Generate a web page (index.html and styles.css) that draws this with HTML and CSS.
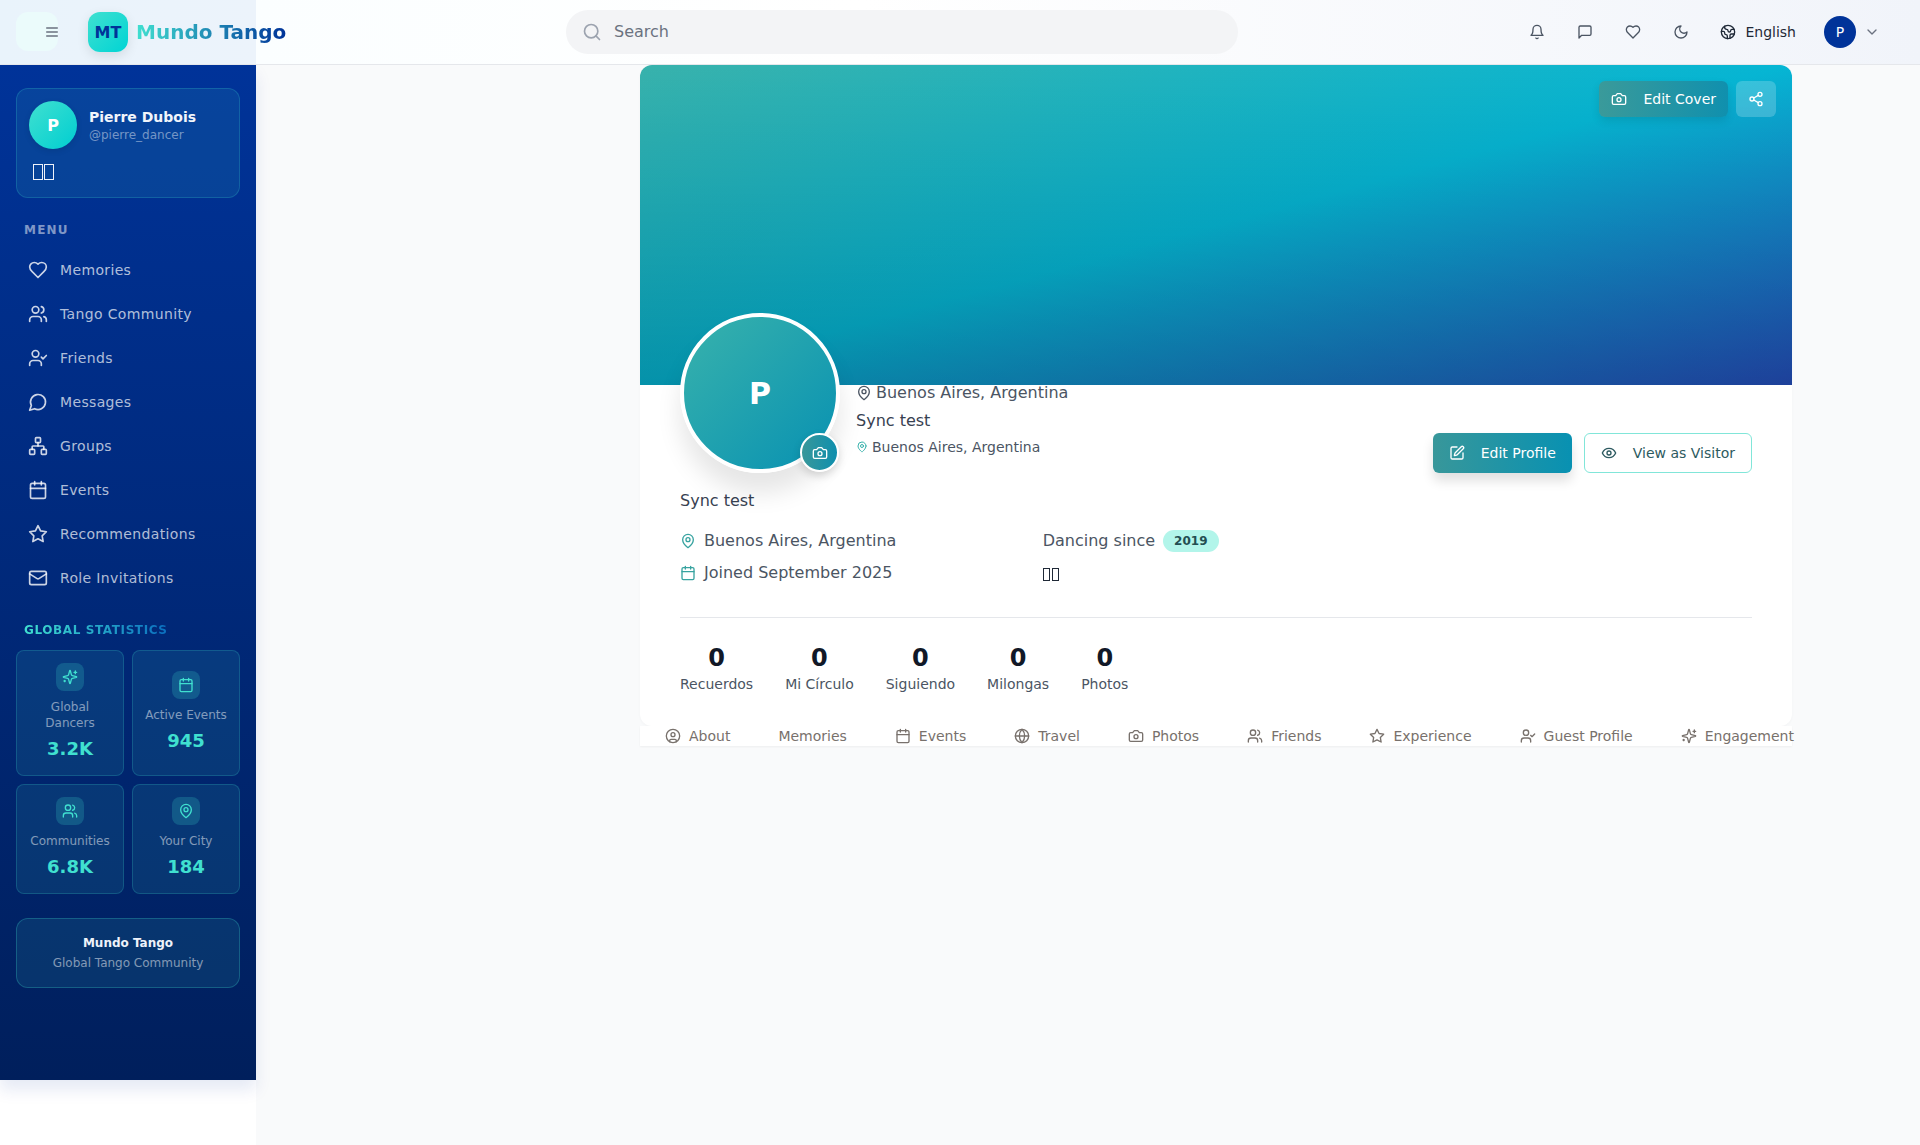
FILE: index.html
```html
<!DOCTYPE html>
<html lang="en">
<head>
  <meta charset="utf-8">
  <title>Mundo Tango</title>
  <meta name="viewport" content="width=device-width, initial-scale=1.0">
  <link rel="stylesheet" href="styles.css">
</head>
<body>
<svg class="sprite" xmlns="http://www.w3.org/2000/svg">
  <symbol id="i-menu" viewBox="0 0 24 24"><path d="M4 6h16M4 12h16M4 18h16"/></symbol>
  <symbol id="i-search" viewBox="0 0 24 24"><circle cx="11" cy="11" r="8"/><path d="m21 21-4.3-4.3"/></symbol>
  <symbol id="i-bell" viewBox="0 0 24 24"><path d="M6 8a6 6 0 0 1 12 0c0 7 3 9 3 9H3s3-2 3-9"/><path d="M10.3 21a1.94 1.94 0 0 0 3.4 0"/></symbol>
  <symbol id="i-square" viewBox="0 0 24 24"><path d="M21 15a2 2 0 0 1-2 2H7l-4 4V5a2 2 0 0 1 2-2h14a2 2 0 0 1 2 2z"/></symbol>
  <symbol id="i-heart" viewBox="0 0 24 24"><path d="M19 14c1.49-1.46 3-3.21 3-5.5A5.5 5.5 0 0 0 16.5 3c-1.76 0-3 .5-4.5 2-1.5-1.5-2.74-2-4.5-2A5.5 5.5 0 0 0 2 8.5c0 2.3 1.5 4.05 3 5.5l7 7Z"/></symbol>
  <symbol id="i-moon" viewBox="0 0 24 24"><path d="M12 3a6 6 0 0 0 9 9 9 9 0 1 1-9-9Z"/></symbol>
  <symbol id="i-earth" viewBox="0 0 24 24"><path d="M21.54 15H17a2 2 0 0 0-2 2v4.54"/><path d="M7 3.34V5a3 3 0 0 0 3 3a2 2 0 0 1 2 2c0 1.1.9 2 2 2a2 2 0 0 0 2-2c0-1.1.9-2 2-2h3.17"/><path d="M11 21.95V18a2 2 0 0 0-2-2a2 2 0 0 1-2-2v-1a2 2 0 0 0-2-2H2.05"/><circle cx="12" cy="12" r="10"/></symbol>
  <symbol id="i-chevron" viewBox="0 0 24 24"><path d="m6 9 6 6 6-6"/></symbol>
  <symbol id="i-users" viewBox="0 0 24 24"><path d="M16 21v-2a4 4 0 0 0-4-4H6a4 4 0 0 0-4 4v2"/><circle cx="9" cy="7" r="4"/><path d="M22 21v-2a4 4 0 0 0-3-3.87"/><path d="M16 3.13a4 4 0 0 1 0 7.75"/></symbol>
  <symbol id="i-usercheck" viewBox="0 0 24 24"><path d="M16 21v-2a4 4 0 0 0-4-4H6a4 4 0 0 0-4 4v2"/><circle cx="9" cy="7" r="4"/><path d="m16 11 2 2 4-4"/></symbol>
  <symbol id="i-message" viewBox="0 0 24 24"><path d="M7.9 20A9 9 0 1 0 4 16.1L2 22Z"/></symbol>
  <symbol id="i-network" viewBox="0 0 24 24"><rect x="16" y="16" width="6" height="6" rx="1"/><rect x="2" y="16" width="6" height="6" rx="1"/><rect x="9" y="2" width="6" height="6" rx="1"/><path d="M5 16v-3a1 1 0 0 1 1-1h12a1 1 0 0 1 1 1v3"/><path d="M12 12V8"/></symbol>
  <symbol id="i-calendar" viewBox="0 0 24 24"><path d="M8 2v4M16 2v4"/><rect x="3" y="4" width="18" height="18" rx="2"/><path d="M3 10h18"/></symbol>
  <symbol id="i-star" viewBox="0 0 24 24"><path d="M12 2l3.09 6.26L22 9.27l-5 4.87 1.18 6.88L12 17.77l-6.18 3.25L7 14.14 2 9.27l6.91-1.01z"/></symbol>
  <symbol id="i-mail" viewBox="0 0 24 24"><rect x="2" y="4" width="20" height="16" rx="2"/><path d="m22 7-8.97 5.7a1.94 1.94 0 0 1-2.06 0L2 7"/></symbol>
  <symbol id="i-sparkles" viewBox="0 0 24 24"><path d="M9.937 15.5A2 2 0 0 0 8.5 14.063l-6.135-1.582a.5.5 0 0 1 0-.962L8.5 9.936A2 2 0 0 0 9.937 8.5l1.582-6.135a.5.5 0 0 1 .963 0L14.063 8.5A2 2 0 0 0 15.5 9.937l6.135 1.581a.5.5 0 0 1 0 .964L15.5 14.063a2 2 0 0 0-1.437 1.437l-1.582 6.135a.5.5 0 0 1-.963 0z"/><path d="M20 3v4M22 5h-4M4 17v2M5 18H3"/></symbol>
  <symbol id="i-pin" viewBox="0 0 24 24"><path d="M20 10c0 6-8 12-8 12s-8-6-8-12a8 8 0 0 1 16 0Z"/><circle cx="12" cy="10" r="3"/></symbol>
  <symbol id="i-camera" viewBox="0 0 24 24"><path d="M14.5 4h-5L7 7H4a2 2 0 0 0-2 2v9a2 2 0 0 0 2 2h16a2 2 0 0 0 2-2V9a2 2 0 0 0-2-2h-3l-2.5-3z"/><circle cx="12" cy="13" r="3"/></symbol>
  <symbol id="i-share" viewBox="0 0 24 24"><circle cx="18" cy="5" r="3"/><circle cx="6" cy="12" r="3"/><circle cx="18" cy="19" r="3"/><path d="m8.59 13.51 6.83 3.98M15.41 6.51l-6.82 3.98"/></symbol>
  <symbol id="i-edit" viewBox="0 0 24 24"><path d="M12 3H5a2 2 0 0 0-2 2v14a2 2 0 0 0 2 2h14a2 2 0 0 0 2-2v-7"/><path d="M18.375 2.625a1 1 0 0 1 3 3l-9.013 9.014a2 2 0 0 1-.853.505l-2.873.84a.5.5 0 0 1-.62-.62l.84-2.873a2 2 0 0 1 .506-.852z"/></symbol>
  <symbol id="i-eye" viewBox="0 0 24 24"><path d="M2 12s3-7 10-7 10 7 10 7-3 7-10 7-10-7-10-7Z"/><circle cx="12" cy="12" r="3"/></symbol>
  <symbol id="i-usercircle" viewBox="0 0 24 24"><circle cx="12" cy="12" r="10"/><circle cx="12" cy="10" r="3"/><path d="M7 20.662V19a2 2 0 0 1 2-2h6a2 2 0 0 1 2 2v1.662"/></symbol>
  <symbol id="i-globe" viewBox="0 0 24 24"><circle cx="12" cy="12" r="10"/><path d="M12 2a14.5 14.5 0 0 0 0 20 14.5 14.5 0 0 0 0-20"/><path d="M2 12h20"/></symbol>
</svg>

<header class="topbar">
  <div class="ghost-logo"></div>
  <div class="topbar-left">
    <button class="menu-btn"><svg class="icon-16"><use href="#i-menu"/></svg></button>
    <div class="logo">MT</div>
    <span class="brand">Mundo Tango</span>
  </div>
  <div class="search">
    <svg class="icon-20"><use href="#i-search"/></svg>
    <span>Search</span>
  </div>
  <div class="topbar-right">
    <button class="top-btn"><svg class="icon-16"><use href="#i-bell"/></svg></button>
    <button class="top-btn"><svg class="icon-16"><use href="#i-square"/></svg></button>
    <button class="top-btn"><svg class="icon-16"><use href="#i-heart"/></svg></button>
    <button class="top-btn"><svg class="icon-16"><use href="#i-moon"/></svg></button>
    <div class="lang"><svg class="icon-16"><use href="#i-earth"/></svg><span>English</span></div>
    <div class="top-avatar">P</div>
    <svg class="icon-16 top-chevron"><use href="#i-chevron"/></svg>
  </div>
</header>

<div class="shell">
  <div class="side-col">
    <aside class="sidebar">
      <div class="me">
        <div class="me-row">
          <div class="me-avatar">P</div>
          <div>
            <div class="me-name">Pierre Dubois</div>
            <div class="me-handle">@pierre_dancer</div>
          </div>
        </div>
        <div class="tofu tofu-lg"><i></i><i></i></div>
      </div>

      <h3 class="side-title">MENU</h3>
      <nav class="side-nav">
        <a><svg class="icon-20"><use href="#i-heart"/></svg>Memories</a>
        <a><svg class="icon-20"><use href="#i-users"/></svg>Tango Community</a>
        <a><svg class="icon-20"><use href="#i-usercheck"/></svg>Friends</a>
        <a><svg class="icon-20"><use href="#i-message"/></svg>Messages</a>
        <a><svg class="icon-20"><use href="#i-network"/></svg>Groups</a>
        <a><svg class="icon-20"><use href="#i-calendar"/></svg>Events</a>
        <a><svg class="icon-20"><use href="#i-star"/></svg>Recommendations</a>
        <a><svg class="icon-20"><use href="#i-mail"/></svg>Role Invitations</a>
      </nav>

      <h3 class="side-title stats-title"><span>GLOBAL STATISTICS</span></h3>
      <div class="stat-grid">
        <div class="stat-card">
          <div class="stat-icon"><svg class="icon-16"><use href="#i-sparkles"/></svg></div>
          <div class="stat-label">Global Dancers</div>
          <div class="stat-value">3.2K</div>
        </div>
        <div class="stat-card">
          <div class="stat-icon"><svg class="icon-16"><use href="#i-calendar"/></svg></div>
          <div class="stat-label">Active Events</div>
          <div class="stat-value">945</div>
        </div>
        <div class="stat-card">
          <div class="stat-icon"><svg class="icon-16"><use href="#i-users"/></svg></div>
          <div class="stat-label">Communities</div>
          <div class="stat-value">6.8K</div>
        </div>
        <div class="stat-card">
          <div class="stat-icon"><svg class="icon-16"><use href="#i-pin"/></svg></div>
          <div class="stat-label">Your City</div>
          <div class="stat-value">184</div>
        </div>
      </div>

      <div class="side-foot">
        <strong>Mundo Tango</strong>
        <span>Global Tango Community</span>
      </div>
    </aside>
  </div>

  <main class="content">
    <section class="card">
      <div class="cover">
        <div class="cover-actions">
          <button class="edit-cover"><svg class="icon-16"><use href="#i-camera"/></svg>Edit Cover</button>
          <button class="share"><svg class="icon-16"><use href="#i-share"/></svg></button>
        </div>
      </div>

      <div class="card-body">
        <div class="head-row">
          <div class="avatar">
            P
            <span class="avatar-cam"><svg class="icon-16"><use href="#i-camera"/></svg></span>
          </div>
          <div class="head-info">
            <div class="head-loc"><svg class="icon-16"><use href="#i-pin"/></svg>Buenos Aires, Argentina</div>
            <div class="head-bio">Sync test</div>
            <div class="head-loc2"><svg class="icon-12"><use href="#i-pin"/></svg>Buenos Aires, Argentina</div>
          </div>
          <div class="head-actions">
            <button class="btn-edit"><svg class="icon-16"><use href="#i-edit"/></svg>Edit Profile</button>
            <button class="btn-visitor"><svg class="icon-16"><use href="#i-eye"/></svg>View as Visitor</button>
          </div>
        </div>

        <p class="bio">Sync test</p>

        <div class="meta">
          <div class="meta-item"><svg class="icon-16"><use href="#i-pin"/></svg>Buenos Aires, Argentina</div>
          <div class="meta-item">Dancing since <span class="badge">2019</span></div>
          <div></div>
          <div class="meta-item"><svg class="icon-16"><use href="#i-calendar"/></svg>Joined September 2025</div>
          <div class="meta-item"><div class="tofu"><i></i><i></i></div></div>
        </div>

        <div class="counts">
          <div class="count"><b>0</b><span>Recuerdos</span></div>
          <div class="count"><b>0</b><span>Mi Círculo</span></div>
          <div class="count"><b>0</b><span>Siguiendo</span></div>
          <div class="count"><b>0</b><span>Milongas</span></div>
          <div class="count"><b>0</b><span>Photos</span></div>
        </div>
      </div>
    </section>

    <nav class="tabs">
      <a><svg class="icon-16"><use href="#i-usercircle"/></svg>About</a>
      <a>Memories</a>
      <a><svg class="icon-16"><use href="#i-calendar"/></svg>Events</a>
      <a><svg class="icon-16"><use href="#i-globe"/></svg>Travel</a>
      <a><svg class="icon-16"><use href="#i-camera"/></svg>Photos</a>
      <a><svg class="icon-16"><use href="#i-users"/></svg>Friends</a>
      <a><svg class="icon-16"><use href="#i-star"/></svg>Experience</a>
      <a><svg class="icon-16"><use href="#i-usercheck"/></svg>Guest Profile</a>
      <a><svg class="icon-16"><use href="#i-sparkles"/></svg>Engagement</a>
    </nav>
  </main>
</div>
</body>
</html>
```

FILE: styles.css
```css
html {
  box-sizing: border-box;
}

*, *:before, *:after {
  box-sizing: inherit;
}

body {
  margin: 0;
  height: 1145px;
  overflow: hidden;
  background: #f9fafb;
  color: #374151;
  font-family: "DejaVu Sans", sans-serif;
  font-size: 16px;
}

button {
  font-family: inherit;
  border: 0;
  background: none;
  padding: 0;
  cursor: pointer;
}

.sprite {
  display: none;
}

.icon-12, .icon-16, .icon-20 {
  fill: none;
  stroke: currentColor;
  stroke-width: 2;
  stroke-linecap: round;
  stroke-linejoin: round;
  flex: none;
}

.icon-12 { width: 12px; height: 12px; }
.icon-16 { width: 16px; height: 16px; }
.icon-20 { width: 20px; height: 20px; }

/* the flag emoji that has no glyph: two empty boxes */
.tofu {
  display: flex;
  gap: 2px;
  margin-top: 3px;
}

.tofu i {
  width: 7px;
  height: 13px;
  border: 1px solid #1f2937;
}

.tofu-lg {
  gap: 1px;
  margin-top: 15px;
  padding-left: 4px;
}

.tofu-lg i {
  width: 10px;
  height: 16px;
  border-color: #eef2fa;
}

/* top bar */
.topbar {
  position: relative;
  display: flex;
  align-items: center;
  height: 65px;
  padding: 0 16px;
  border-bottom: 1px solid #e5e7eb;
  background: linear-gradient(90deg, #e9f3fb 0, #ecf3fb 256px, #fbfeff 256px, #fff 45%, #f1f4fa 100%);
}

.ghost-logo {
  position: absolute;
  left: 16px;
  top: 12px;
  width: 42px;
  height: 39px;
  border-radius: 12px;
  background: #ebfbfb;
}

.topbar-left {
  position: relative;
  display: flex;
  align-items: center;
  width: 550px;
}

.menu-btn {
  display: flex;
  align-items: center;
  justify-content: center;
  width: 72px;
  height: 40px;
  color: #6b7280;
}

.logo {
  display: flex;
  align-items: center;
  justify-content: center;
  width: 40px;
  height: 40px;
  border-radius: 12px;
  background: linear-gradient(135deg, #40e0d0, #00d4d4);
  box-shadow: 0 4px 12px rgba(0, 0, 0, .1);
  color: #003399;
  font-size: 16px;
  font-weight: 700;
}

.brand {
  margin-left: 8px;
  font-size: 20px;
  font-weight: 700;
  background: linear-gradient(90deg, #40e0d0, #003399);
  -webkit-background-clip: text;
  background-clip: text;
  color: transparent;
}

.search {
  display: flex;
  align-items: center;
  gap: 12px;
  width: 672px;
  height: 44px;
  padding-left: 16px;
  border-radius: 22px;
  background: #f3f4f6;
  color: #6b7280;
  font-size: 16px;
}

.search span {
  margin-top: -1px;
}

.search svg {
  color: #9ca3af;
}

.topbar-right {
  display: flex;
  align-items: center;
  margin-left: auto;
}

.top-btn {
  display: flex;
  align-items: center;
  justify-content: center;
  width: 40px;
  height: 40px;
  margin-right: 8px;
  color: #4b5563;
}

.lang {
  display: flex;
  align-items: center;
  gap: 9px;
  margin-left: 11px;
  margin-right: 28px;
  color: #1f2937;
  font-size: 14px;
}

.top-avatar {
  display: flex;
  align-items: center;
  justify-content: center;
  width: 32px;
  height: 32px;
  border-radius: 50%;
  background: #003399;
  color: #fff;
  font-size: 14px;
}

.top-chevron {
  margin-left: 8px;
  margin-right: 24px;
  color: #6b7280;
}

/* sidebar */
.shell {
  display: flex;
  align-items: flex-start;
}

.side-col {
  flex: none;
  width: 256px;
  height: 1080px;
  background: #fff;
}

.sidebar {
  height: 1015px;
  padding: 23px 16px 0;
  background: linear-gradient(180deg, #003399, #001f5c);
  box-shadow: 0 10px 15px rgba(0, 51, 153, .1);
}

.me {
  height: 110px;
  padding: 12px;
  border: 1px solid rgba(64, 224, 208, .2);
  border-radius: 12px;
  background: rgba(64, 224, 208, .1);
}

.me-row {
  display: flex;
  align-items: center;
  gap: 12px;
}

.me-avatar {
  display: flex;
  align-items: center;
  justify-content: center;
  width: 48px;
  height: 48px;
  border-radius: 50%;
  background: linear-gradient(135deg, #40e0d0, #00ced1);
  box-shadow: 0 2px 6px rgba(0, 0, 0, .1);
  color: #fff;
  font-size: 16px;
  font-weight: 700;
}

.me-name {
  color: #f1f5fb;
  font-size: 14px;
  font-weight: 700;
  line-height: 20px;
}

.me-handle {
  color: rgba(255, 255, 255, .45);
  font-size: 12px;
  line-height: 16px;
}

.side-title {
  margin: 24px 8px 10px;
  color: rgba(255, 255, 255, .5);
  font-size: 12px;
  font-weight: 700;
  line-height: 16px;
  letter-spacing: 1.2px;
}

.side-nav a {
  display: flex;
  align-items: center;
  gap: 12px;
  height: 44px;
  padding-left: 12px;
  color: rgba(255, 255, 255, .7);
  font-size: 14px;
  letter-spacing: .35px;
}

.side-nav svg {
  color: rgba(255, 255, 255, .8);
}

.stats-title {
  margin-top: 22px;
  margin-bottom: 12px;
  letter-spacing: .6px;
}

.stats-title span {
  background: linear-gradient(90deg, #40e0d0, #0a6fc0);
  -webkit-background-clip: text;
  background-clip: text;
  color: transparent;
}

.stat-grid {
  display: grid;
  grid-template-columns: 1fr 1fr;
  gap: 8px;
}

.stat-card {
  display: flex;
  flex-direction: column;
  align-items: center;
  justify-content: center;
  padding: 12px;
  border: 1px solid rgba(64, 224, 208, .2);
  border-radius: 8px;
  background: rgba(64, 224, 208, .1);
  text-align: center;
}

.stat-icon {
  display: flex;
  align-items: center;
  justify-content: center;
  width: 28px;
  height: 28px;
  margin-bottom: 8px;
  border-radius: 8px;
  background: rgba(64, 224, 208, .2);
  color: #40e0d0;
}

.stat-label {
  color: rgba(255, 255, 255, .5);
  font-size: 12px;
  line-height: 16px;
}

.stat-value {
  margin-top: 4px;
  color: #40e0d0;
  font-size: 18px;
  font-weight: 700;
  line-height: 28px;
}

.side-foot {
  display: flex;
  flex-direction: column;
  gap: 4px;
  margin-top: 24px;
  padding: 16px;
  border: 1px solid rgba(64, 224, 208, .25);
  border-radius: 12px;
  background: rgba(64, 224, 208, .1);
  font-size: 12px;
  line-height: 16px;
  text-align: center;
}

.side-foot strong {
  color: #eef2fa;
}

.side-foot span {
  color: rgba(255, 255, 255, .5);
}

/* profile */
.content {
  flex: none;
  width: 1152px;
  margin-left: 384px;
}

.card {
  border-radius: 12px;
  background: #fff;
  box-shadow: 0 1px 3px rgba(0, 0, 0, .03);
}

.cover {
  display: flex;
  justify-content: flex-end;
  height: 320px;
  padding: 16px;
  border-radius: 12px 12px 0 0;
  background: linear-gradient(to top, rgba(0, 0, 0, .2), transparent), linear-gradient(to bottom right, #38b2ac, #06b6d4, #2550c0);
}

.cover-actions {
  display: flex;
  gap: 8px;
  height: 36px;
}

.edit-cover {
  display: flex;
  align-items: center;
  gap: 16px;
  padding: 0 12px;
  border-radius: 6px;
  background: linear-gradient(90deg, #3a9a9a, #1090ae);
  box-shadow: 0 4px 8px rgba(0, 0, 0, .1);
  color: #fff;
  font-size: 14px;
}

.share {
  display: flex;
  align-items: center;
  justify-content: center;
  width: 40px;
  border-radius: 6px;
  background: rgba(255, 255, 255, .2);
  color: #fff;
}

.card-body {
  padding: 0 40px 32px;
}

.head-row {
  position: relative;
  display: flex;
  align-items: flex-end;
  gap: 16px;
  height: 160px;
  margin-top: -72px;
}

.avatar {
  position: relative;
  display: flex;
  align-items: center;
  justify-content: center;
  flex: none;
  width: 160px;
  height: 160px;
  border: 4px solid #fff;
  border-radius: 50%;
  background: linear-gradient(135deg, #38b2ac, #0891b2);
  box-shadow: 0 20px 25px rgba(0, 0, 0, .1);
  color: #fff;
  font-size: 30px;
  font-weight: 700;
}

.avatar-cam {
  position: absolute;
  right: -3px;
  bottom: -3px;
  display: flex;
  align-items: center;
  justify-content: center;
  width: 39px;
  height: 39px;
  border: 2px solid #fff;
  border-radius: 50%;
  background: linear-gradient(90deg, #38979a, #0f8fae);
  box-shadow: 0 4px 8px rgba(0, 0, 0, .15);
}

.head-info {
  padding-bottom: 15px;
}

.head-loc {
  display: flex;
  align-items: center;
  gap: 4px;
  color: #4b5563;
  line-height: 24px;
}

.head-bio {
  margin-top: 4px;
  color: #374151;
  line-height: 24px;
}

.head-loc2 {
  display: flex;
  align-items: center;
  gap: 4px;
  margin-top: 3px;
  color: #4b5563;
  font-size: 14px;
  line-height: 22px;
}

.head-loc2 svg {
  color: #38b2ac;
}

.head-actions {
  display: flex;
  gap: 12px;
  margin-left: auto;
}

.btn-edit, .btn-visitor {
  display: flex;
  align-items: center;
  gap: 16px;
  height: 40px;
  padding: 0 16px;
  border-radius: 6px;
  font-size: 14px;
}

.btn-edit {
  background: linear-gradient(90deg, #38979a, #0891b2);
  box-shadow: 0 8px 12px rgba(0, 0, 0, .12);
  color: #fff;
}

.btn-visitor {
  border: 1px solid #81e6d9;
  background: #fff;
  color: #2d5a60;
}

.bio {
  margin: 16px 0;
  color: #374151;
  line-height: 24px;
}

.meta {
  display: grid;
  grid-template-columns: repeat(3, 1fr);
  gap: 8px 16px;
  padding-bottom: 32px;
  border-bottom: 1px solid #e5e7eb;
}

.meta-item {
  display: flex;
  align-items: center;
  gap: 8px;
  height: 24px;
  color: #4b5563;
  line-height: 24px;
}

.meta-item svg {
  color: #38a3a0;
}

.badge {
  padding: 0 11px;
  border-radius: 11px;
  background: #b2f5ea;
  color: #234e52;
  font-size: 12px;
  font-weight: 700;
  line-height: 22px;
}

.counts {
  display: flex;
  gap: 32px;
  margin-top: 24px;
}

.count {
  display: flex;
  flex-direction: column;
  align-items: center;
}

.count b {
  color: #111827;
  font-size: 24px;
  line-height: 32px;
}

.count span {
  color: #4b5563;
  font-size: 14px;
  line-height: 20px;
}

.tabs {
  display: flex;
  height: 20px;
  padding-left: 1px;
  background: #fff;
  box-shadow: 0 1px 2px rgba(0, 0, 0, .05);
}

.tabs a {
  display: flex;
  align-items: center;
  flex: none;
  gap: 8px;
  padding: 0 24px;
  color: #78716c;
  font-size: 14px;
}
```
